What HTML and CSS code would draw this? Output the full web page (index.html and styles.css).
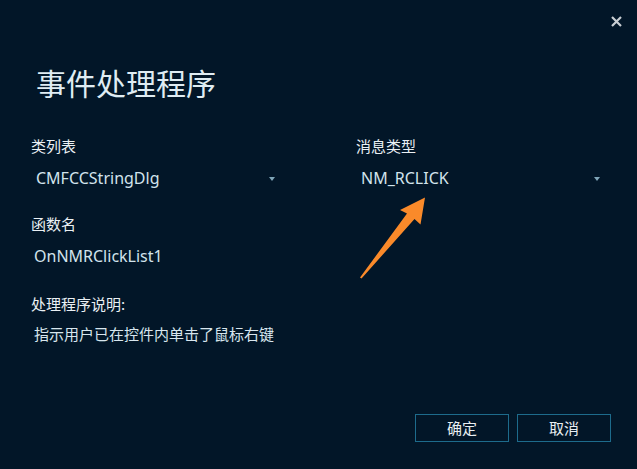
FILE: index.html
```html
<!DOCTYPE html>
<html lang="zh-CN">
<head>
<meta charset="utf-8">
<title>事件处理程序</title>
<link rel="stylesheet" href="styles.css">
</head>
<body>
<div class="dialog">
  <div class="topbar">
    <button class="close" aria-label="关闭">
      <svg width="11" height="11" viewBox="0 0 11 11"><path d="M1 1 L10 10 M10 1 L1 10" stroke="#c9ced3" stroke-width="2.2" fill="none"/></svg>
    </button>
  </div>
  <h1 class="title">事件处理程序</h1>
  <div class="fields">
    <div class="field">
      <div class="label">类列表</div>
      <div class="combo"><span class="combo-text">CMFCCStringDlg</span><span class="caret"></span></div>
    </div>
    <div class="field">
      <div class="label">消息类型</div>
      <div class="combo"><span class="combo-text">NM_RCLICK</span><span class="caret"></span></div>
    </div>
    <div class="field">
      <div class="label">函数名</div>
      <div class="edit">OnNMRClickList1</div>
    </div>
    <div class="field wide">
      <div class="label">处理程序说明:</div>
      <div class="desc">指示用户已在控件内单击了鼠标右键</div>
    </div>
  </div>
  <div class="footer">
    <button class="btn">确定</button>
    <button class="btn">取消</button>
  </div>
  <svg class="annot" width="637" height="469" viewBox="0 0 637 469">
    <polygon points="425,197.5 420.5,224.5 414.5,219 361.5,278.5 360,277.5 407,213.5 400,210" fill="#fa8a2a"/>
  </svg>
</div>
</body>
</html>
```

FILE: styles.css
```css
html, body {
  margin: 0;
  padding: 0;
  background: #021628;
}
body {
  font-family: "Noto Sans", "Noto Sans CJK SC", sans-serif;
  color: #e8eef2;
}
.dialog {
  position: relative;
  width: 637px;
  height: 469px;
  background: #021628;
  display: flex;
  flex-direction: column;
  box-sizing: border-box;
  overflow: hidden;
}
.topbar {
  display: flex;
  justify-content: flex-end;
  padding: 16px 15px 0 0;
  height: 11px;
}
.close {
  background: none;
  border: 0;
  padding: 0;
  width: 11px;
  height: 11px;
  display: block;
  line-height: 0;
}
.title {
  margin: 35px 0 0 0;
  padding-left: 36px;
  font-family: "Noto Sans CJK SC", sans-serif;
  font-size: 30px;
  font-weight: 400;
  line-height: 40px;
  color: #dfecf3;
}
.fields {
  display: grid;
  grid-template-columns: 250px 250px;
  column-gap: 75px;
  row-gap: 24px;
  padding-left: 31px;
  margin-top: 34px;
}
.field.wide {
  grid-column: 1 / -1;
  margin-top: 2px;
}
.label {
  font-family: "Noto Sans CJK SC", sans-serif;
  font-size: 15px;
  line-height: 20px;
  color: #eaf0f4;
}
.combo {
  margin-top: 10px;
  display: flex;
  justify-content: space-between;
  align-items: center;
  padding: 0 6px 0 5px;
  height: 24px;
}
.combo-text, .edit {
  font-size: 16px;
  line-height: 24px;
  color: #d2e3ec;
}
.edit {
  margin-top: 10px;
  padding-left: 3px;
}
.caret {
  width: 0;
  height: 0;
  border-left: 3.5px solid transparent;
  border-right: 3.5px solid transparent;
  border-top: 4px solid #7fa5b8;
  margin-top: 1px;
}
.desc {
  margin-top: 8px;
  padding-left: 3px;
  font-family: "Noto Sans CJK SC", sans-serif;
  font-size: 15px;
  line-height: 24px;
  color: #d8e6ee;
}
.footer {
  margin-top: auto;
  display: flex;
  justify-content: flex-end;
  gap: 8px;
  padding: 0 26px 27px 0;
}
.btn {
  width: 94px;
  height: 28px;
  box-sizing: border-box;
  background: transparent;
  border: 1px solid #1d6b8c;
  color: #e8eef2;
  font-family: "Noto Sans CJK SC", sans-serif;
  font-size: 15px;
  line-height: 26px;
  padding: 0;
}
.annot {
  position: absolute;
  left: 0;
  top: 0;
  pointer-events: none;
}
```
